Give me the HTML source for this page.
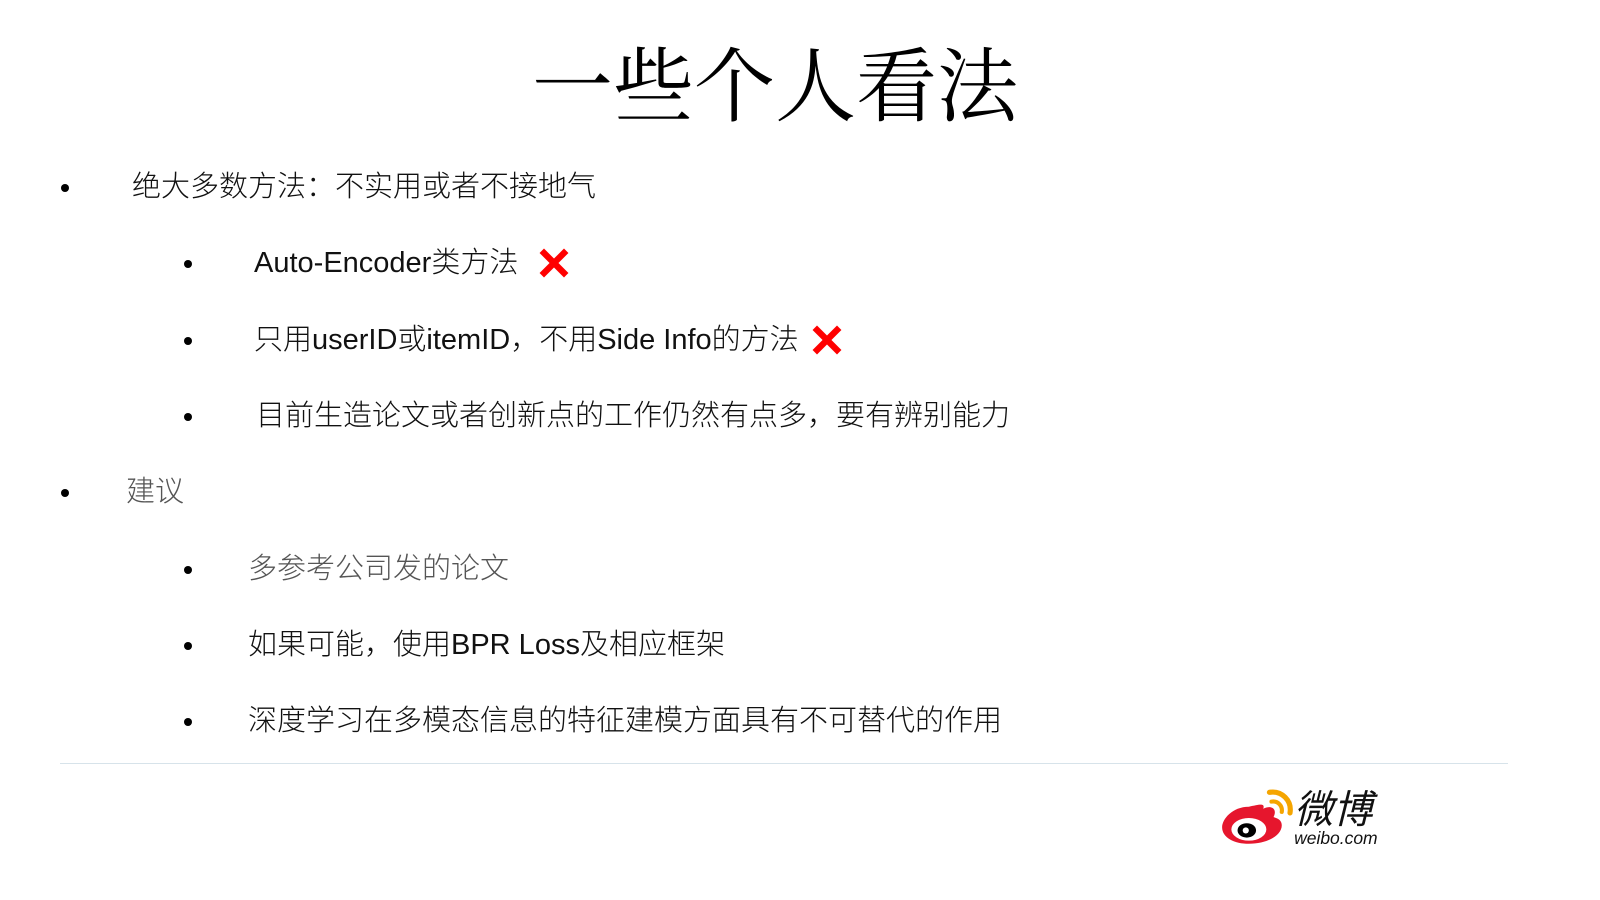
<!DOCTYPE html>
<html><head><meta charset="utf-8"><style>
body{margin:0;width:1600px;height:900px;background:#fff;position:relative;overflow:hidden;font-family:"Liberation Sans","Noto Sans CJK SC",sans-serif;color:#111}
.t{position:absolute;left:0;width:1550px;text-align:center;top:38px;font-family:"Liberation Serif","Noto Serif CJK SC",serif;font-size:81px;line-height:100px;color:#000}
.l{position:absolute;font-size:29px;line-height:36px;white-space:nowrap;font-weight:300}
.b{position:absolute;width:8px;height:8px;border-radius:50%;background:#000}
.x{display:inline-block;vertical-align:middle}
.hr{position:absolute;left:60px;top:763px;width:1448px;height:1px;background:#d7e3ea}
</style></head><body>
<div class="t">一些个人看法</div>
<div class="b" style="left:61px;top:184px"></div><div class="l" style="left:132px;top:169px">绝大多数方法：不实用或者不接地气</div>
<div class="b" style="left:184px;top:260px"></div><div class="l" style="left:254px;top:245px">Auto-Encoder类方法<svg class="x" width="40" height="40" viewBox="0 0 36 36" style="margin-left:16px;margin-top:-2px"><path d="M5 9 L9 5 L18 14 L27 5 L31 9 L22 18 L31 27 L27 31 L18 22 L9 31 L5 27 L14 18Z" fill="#f00"/></svg></div>
<div class="b" style="left:184px;top:337px"></div><div class="l" style="left:254px;top:322px">只用userID或itemID，不用Side Info的方法<svg class="x" width="40" height="40" viewBox="0 0 36 36" style="margin-left:8px;margin-top:-2px"><path d="M5 9 L9 5 L18 14 L27 5 L31 9 L22 18 L31 27 L27 31 L18 22 L9 31 L5 27 L14 18Z" fill="#f00"/></svg></div>
<div class="b" style="left:184px;top:413px"></div><div class="l" style="left:256px;top:398px">目前生造论文或者创新点的工作仍然有点多，要有辨别能力</div>
<div class="b" style="left:61px;top:489px"></div><div class="l" style="left:126px;top:474px;color:#555">建议</div>
<div class="b" style="left:184px;top:566px"></div><div class="l" style="left:248px;top:551px;color:#555">多参考公司发的论文</div>
<div class="b" style="left:184px;top:642px"></div><div class="l" style="left:248px;top:627px">如果可能，使用BPR Loss及相应框架</div>
<div class="b" style="left:184px;top:718px"></div><div class="l" style="left:248px;top:703px">深度学习在多模态信息的特征建模方面具有不可替代的作用</div>
<div class="hr"></div>
<svg style="position:absolute;left:1218px;top:783px" width="180" height="66" viewBox="0 0 175 62">
<path d="M30 22 C14 22 4 34 4 42 C4 52 16 58 30 58 C48 58 62 50 62 40 C62 34 56 33 54 32 C58 24 52 20 44 24 C46 18 40 20 30 22Z" fill="#e6162d"/>
<ellipse cx="30" cy="44" rx="17" ry="11" fill="#fff"/>
<ellipse cx="28" cy="45" rx="9" ry="7" fill="#000"/>
<circle cx="27" cy="45" r="3" fill="#fff"/>
<path d="M50 8 C62 6 72 16 70 28" stroke="#f5a500" stroke-width="5" fill="none" stroke-linecap="round"/>
<path d="M52 17 C58 16 63 21 62 27" stroke="#f5a500" stroke-width="4" fill="none" stroke-linecap="round"/>
<text x="74" y="38" font-family="Noto Sans CJK SC,sans-serif" font-size="38" font-style="italic" fill="#111">微博</text>
<text x="74" y="58" font-family="Liberation Sans,sans-serif" font-size="17" font-style="italic" fill="#111">weibo.com</text>
</svg>
</body></html>
